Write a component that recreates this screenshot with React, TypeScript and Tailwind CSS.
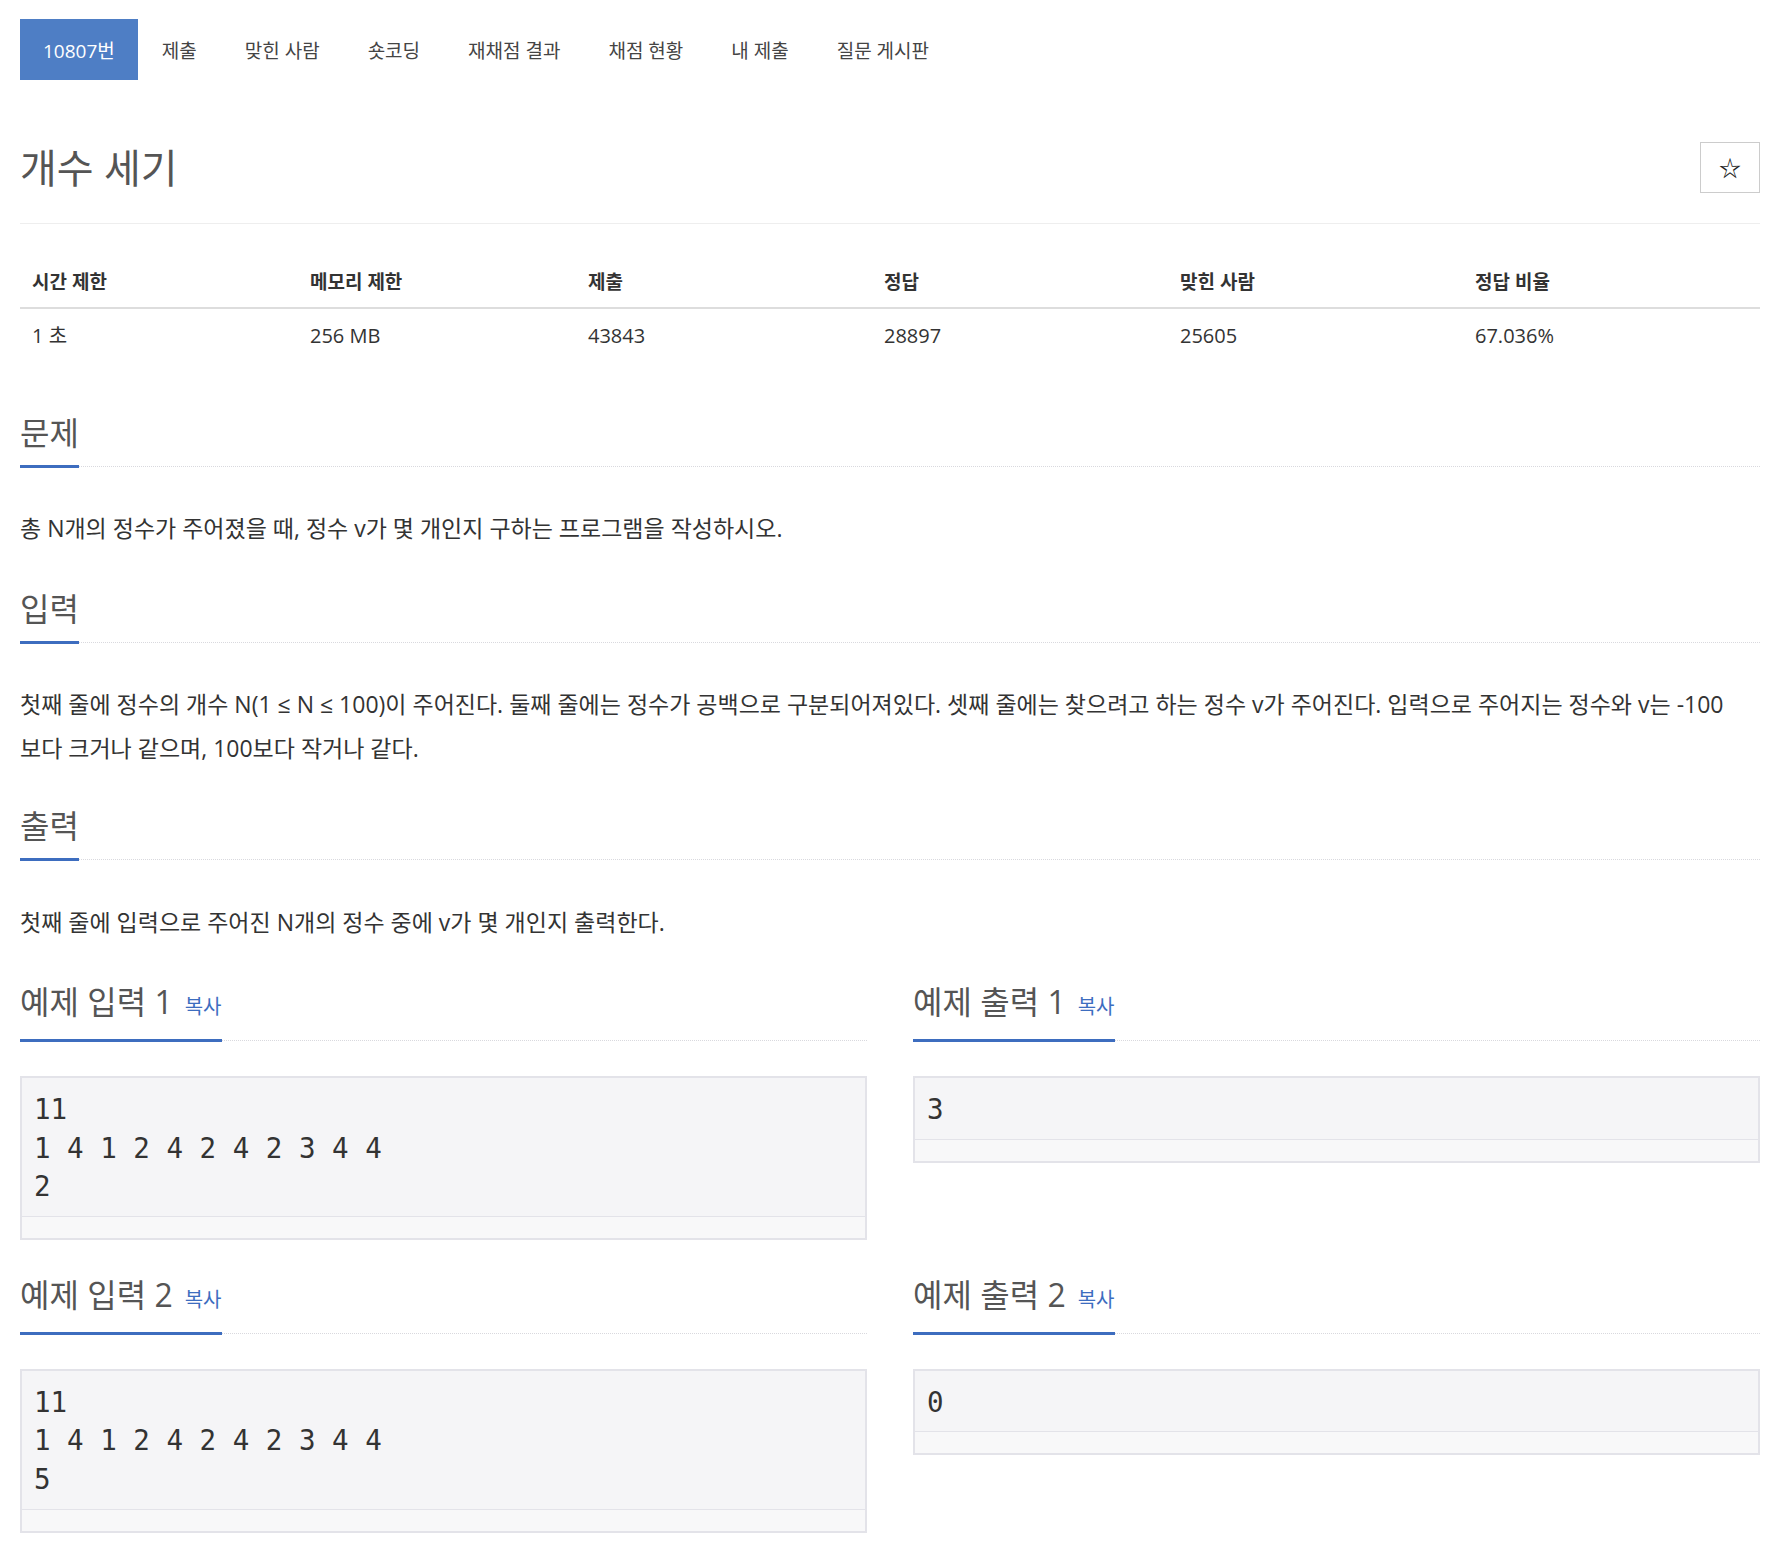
const tabs = ["제출", "맞힌 사람", "숏코딩", "재채점 결과", "채점 현황", "내 제출", "질문 게시판"];

const stats = [
  { label: "시간 제한", value: "1 초" },
  { label: "메모리 제한", value: "256 MB" },
  { label: "제출", value: "43843" },
  { label: "정답", value: "28897" },
  { label: "맞힌 사람", value: "25605" },
  { label: "정답 비율", value: "67.036%" },
];

function Headline({ title, copy }: { title: string; copy?: boolean }) {
  return (
    <div className="flex items-end border-b border-dotted border-[#d9d9de]">
      <h2 className="-mb-[2px] border-b-[3px] border-[#3d6dbf] pb-[14px] text-[32px] font-normal leading-[36px] text-[#555]">
        {title}
        {copy ? <span className="ml-[12px] text-[20px] text-[#3d6dbf]">복사</span> : null}
      </h2>
    </div>
  );
}

function Sample({ title, lines }: { title: string; lines: string[] }) {
  return (
    <div className="flex-1">
      <Headline title={title} copy />
      <div className="mt-[35px] border-2 border-[#e3e3e9]">
        <pre className="border-b border-[#e3e3e9] bg-[#f5f5f7] px-[12px] pb-[10px] pt-[12px] font-['DejaVu_Sans_Mono',monospace] text-[27.5px] leading-[38.6px] text-[#333]">
          {lines.join("\n")}
        </pre>
        <div className="h-[21px] bg-[#f8f8f9]" />
      </div>
    </div>
  );
}

export default function App() {
  return (
    <div className="min-h-[1550px] bg-white pl-[20px] pr-[22px] font-['Open_Sans','Noto_Sans_CJK_KR',sans-serif] text-[#333]">
      <nav className="flex pt-[19px]">
        <div className="flex h-[61px] items-center bg-[#4e7ec5] px-[23px] pt-[4px] text-[19px] text-white">10807번</div>
        {tabs.map((t) => (
          <div key={t} className="flex h-[61px] items-center px-[24px] pt-[4px] text-[19px] text-[#444]">
            {t}
          </div>
        ))}
      </nav>

      <div className="mt-[62px] flex items-center justify-between border-b border-[#eee] pb-[30px]">
        <h1 className="text-[40px] font-normal leading-[51px] text-[#555]">개수 세기</h1>
        <button className="flex h-[51px] w-[60px] items-center justify-center border border-[#ccc] bg-white text-[22px] text-[#222]">
          ☆
        </button>
      </div>

      <div className="mt-[34px]">
        <div className="grid grid-cols-[278px_278px_296px_296px_295px_1fr] border-b-2 border-[#ddd]">
          {stats.map((s) => (
            <div key={s.label} className="px-[12px] py-[12px] text-[19px] font-bold leading-[25px] text-[#333]">
              {s.label}
            </div>
          ))}
        </div>
        <div className="grid grid-cols-[278px_278px_296px_296px_295px_1fr]">
          {stats.map((s) => (
            <div key={s.label} className="px-[12px] pb-[10px] pt-[14px] text-[20px] leading-[25px] text-[#333]">
              {s.value}
            </div>
          ))}
        </div>
      </div>

      <section className="mt-[57px]">
        <Headline title="문제" />
        <p className="mt-[39px] text-[23px] leading-[44px]">
          총 N개의 정수가 주어졌을 때, 정수 v가 몇 개인지 구하는 프로그램을 작성하시오.
        </p>
      </section>

      <section className="mt-[41px]">
        <Headline title="입력" />
        <p className="mt-[39px] text-[23px] leading-[44px]">
          첫째 줄에 정수의 개수 N(1 ≤ N ≤ 100)이 주어진다. 둘째 줄에는 정수가 공백으로 구분되어져있다. 셋째 줄에는 찾으려고 하는 정수 v가 주어진다. 입력으로 주어지는 정수와 v는 -100
          <br />
          보다 크거나 같으며, 100보다 작거나 같다.
        </p>
      </section>

      <section className="mt-[38px]">
        <Headline title="출력" />
        <p className="mt-[40px] text-[23px] leading-[44px]">
          첫째 줄에 입력으로 주어진 N개의 정수 중에 v가 몇 개인지 출력한다.
        </p>
      </section>

      <div className="mt-[40px] flex gap-[46px]">
        <Sample title="예제 입력 1" lines={["11", "1 4 1 2 4 2 4 2 3 4 4", "2"]} />
        <Sample title="예제 출력 1" lines={["3"]} />
      </div>

      <div className="mt-[37px] flex items-start gap-[46px]">
        <Sample title="예제 입력 2" lines={["11", "1 4 1 2 4 2 4 2 3 4 4", "5"]} />
        <Sample title="예제 출력 2" lines={["0"]} />
      </div>
    </div>
  );
}
